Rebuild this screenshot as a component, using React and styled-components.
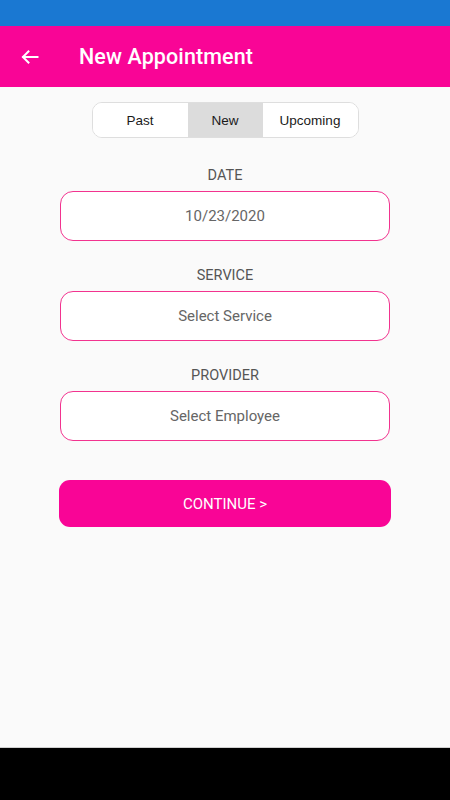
import React from "react";
import styled, { createGlobalStyle } from "styled-components";

const Global = createGlobalStyle`
  html, body { margin: 0; padding: 0; }
  body { font-family: Roboto, "Noto Sans", sans-serif; background: #fafafa; }
`;

const Screen = styled.div`
  width: 450px;
  height: 800px;
  display: flex;
  flex-direction: column;
  background: #fafafa;
  overflow: hidden;
`;

const StatusBar = styled.div`
  height: 26px;
  background: #1a78d2;
  flex-shrink: 0;
`;

const Header = styled.header`
  height: 61px;
  background: #f90596;
  display: flex;
  align-items: center;
  flex-shrink: 0;
`;

const BackButton = styled.button`
  width: 60px;
  height: 61px;
  padding: 0 0 0 20px;
  border: 0;
  background: transparent;
  display: flex;
  align-items: center;
  cursor: pointer;
`;

const Title = styled.h1`
  margin: 0 0 0 19px;
  color: #fff;
  font-size: 21.5px;
  font-weight: 500;
  letter-spacing: 0.1px;
`;

const Body = styled.main`
  flex: 1;
  display: flex;
  flex-direction: column;
  align-items: center;
  padding-top: 15px;
  border-bottom: 1px solid #cfcfcf;
`;

const Segmented = styled.div`
  display: flex;
  width: 265px;
  height: 34px;
  border: 1.5px solid #dedede;
  border-radius: 10px;
  overflow: hidden;
  background: #fff;
`;

const Segment = styled.div`
  width: ${(p) => p.$w}px;
  display: flex;
  align-items: center;
  justify-content: center;
  font-family: "Liberation Sans", Arial, sans-serif;
  font-size: 13.5px;
  color: #1a1a1a;
  background: ${(p) => (p.$active ? "#dcdcdc" : "#fff")};
`;

const Field = styled.div`
  display: flex;
  flex-direction: column;
  align-items: center;
  margin-top: ${(p) => p.$mt}px;
`;

const Label = styled.div`
  font-size: 14.5px;
  color: #555;
  line-height: 17px;
  height: 17px;
  margin-bottom: 7px;
`;

const InputBox = styled.div`
  width: 328px;
  height: 48px;
  border: 1px solid #f2338f;
  border-radius: 13px;
  background: #fff;
  display: flex;
  align-items: center;
  justify-content: center;
  font-size: 15px;
  color: #666;
`;

const ContinueButton = styled.button`
  margin-top: 39px;
  width: 332px;
  height: 47px;
  border: 0;
  border-radius: 11px;
  background: #f90596;
  color: #fff;
  font-family: Roboto, sans-serif;
  font-size: 15px;
  cursor: pointer;
`;

const NavBar = styled.div`
  height: 52px;
  background: #000;
  flex-shrink: 0;
`;

export default function App() {
  return (
    <Screen>
      <Global />
      <StatusBar />
      <Header>
        <BackButton aria-label="Back">
          <svg width="20" height="20" viewBox="0 0 24 24" fill="none" stroke="#fff" strokeWidth="2.4" strokeLinecap="square">
            <path d="M21 12H4" />
            <path d="M11 4.5L3.5 12 11 19.5" strokeLinejoin="miter" strokeLinecap="butt" />
          </svg>
        </BackButton>
        <Title>New Appointment</Title>
      </Header>
      <Body>
        <Segmented>
          <Segment $w={95}>Past</Segment>
          <Segment $w={75} $active>New</Segment>
          <Segment $w={95}>Upcoming</Segment>
        </Segmented>
        <Field $mt={29}>
          <Label>DATE</Label>
          <InputBox>10/23/2020</InputBox>
        </Field>
        <Field $mt={26}>
          <Label>SERVICE</Label>
          <InputBox>Select Service</InputBox>
        </Field>
        <Field $mt={26}>
          <Label>PROVIDER</Label>
          <InputBox>Select Employee</InputBox>
        </Field>
        <ContinueButton>CONTINUE &gt;</ContinueButton>
      </Body>
      <NavBar />
    </Screen>
  );
}
